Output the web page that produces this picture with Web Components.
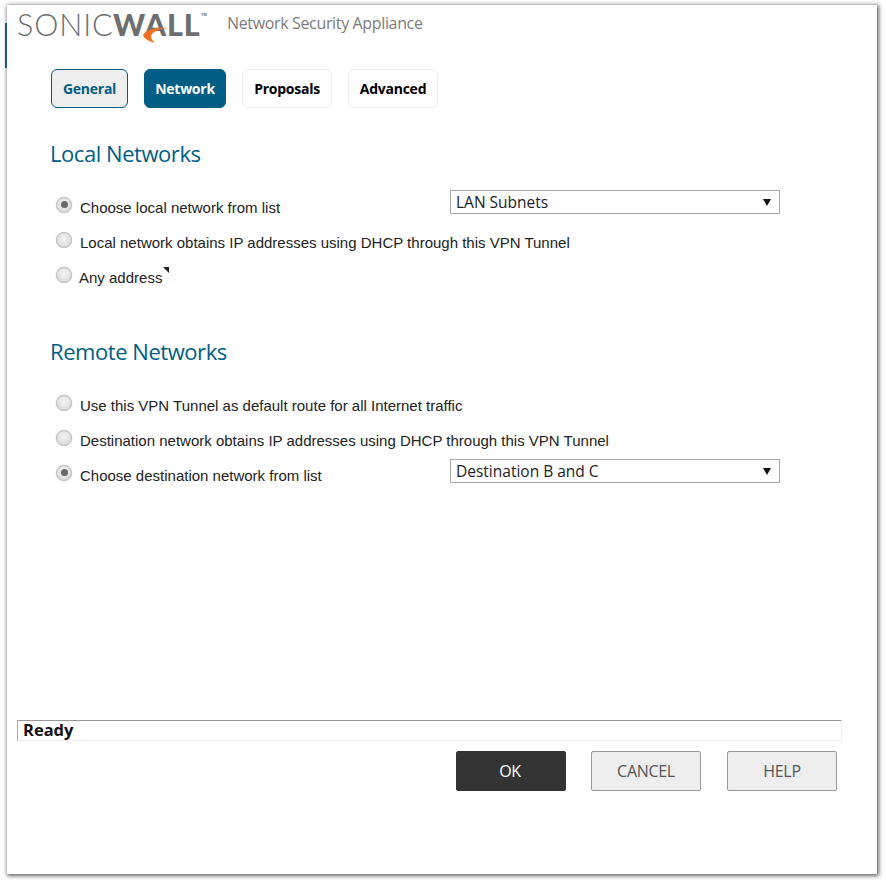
<!DOCTYPE html>
<html><head><meta charset="utf-8"><style>
html,body{margin:0;padding:0;background:#fff;overflow:hidden}
body{width:886px;height:883px}
</style></head><body>
<sw-dialog>
  <sw-header slot="header"></sw-header>
  <sw-tabs slot="tabs"></sw-tabs>
  <sw-section heading="Local Networks" style="--top:28px;--hgap:18px;--ry:-1px;--ty:2px">
    <sw-radio checked select="LAN Subnets">Choose local network from list</sw-radio>
    <sw-radio>Local network obtains IP addresses using DHCP through this VPN Tunnel</sw-radio>
    <sw-radio mark style="--gap:7px">Any address</sw-radio>
  </sw-section>
  <sw-section heading="Remote Networks" style="--top:41px;--hgap:19px;--ry:-2px;--ty:1px">
    <sw-radio>Use this VPN Tunnel as default route for all Internet traffic</sw-radio>
    <sw-radio>Destination network obtains IP addresses using DHCP through this VPN Tunnel</sw-radio>
    <sw-radio checked select="Destination B and C">Choose destination network from list</sw-radio>
  </sw-section>
  <sw-status slot="status">Ready</sw-status>
  <sw-actions slot="actions"></sw-actions>
</sw-dialog>
<script>
function def(name,html,init){
  customElements.define(name,class extends HTMLElement{
    constructor(){super();this.attachShadow({mode:'open'}).innerHTML=html;}
    connectedCallback(){if(init)init(this,this.shadowRoot);}
  });
}
def('sw-dialog',`<style>
:host{display:flex;flex-direction:column;box-sizing:border-box;width:870px;height:869px;margin:5px 0 0 7px;background:#fff;
box-shadow:1px 1px 4px 1px rgba(0,0,0,.6);position:relative}
.main{flex:1;display:flex;flex-direction:column;padding:0 0 0 43px}
.edge{position:absolute;left:-2px;top:18px;width:2px;height:45px;background:#1d5a70}
</style><div class="edge"></div>
<slot name="header"></slot><slot name="tabs"></slot>
<div class="main"><slot></slot></div>
<slot name="status"></slot><slot name="actions"></slot>`);

def('sw-header',`<style>
:host{display:flex;align-items:flex-start;height:64px;padding-left:10px;box-sizing:border-box}
.logo{position:relative;width:190px;height:42px;display:flex;align-items:baseline;padding-top:3px;box-sizing:border-box;
font:30.500px/32px "Lato","Open Sans",sans-serif;color:#6d6e70}
.s{font-weight:300;letter-spacing:.9px}
.w{font-weight:900;letter-spacing:.9px;margin-left:-.5px;font-size:30.500px}
.tm{position:absolute;left:184px;top:8px;font:bold 4px/4px "Liberation Sans",sans-serif;letter-spacing:0}
svg{position:absolute;left:126px;top:22px}
.t{margin-left:20px;padding-top:8px;font:16px/20px "Open Sans",sans-serif;color:#7b7b7b;letter-spacing:-.35px}
</style>
<div class="logo"><span class="s">SONIC</span><span class="w">WALL</span><span class="tm">TM</span>
<svg width="26" height="17" viewBox="0 0 26 17"><path d="M0 8C3 3 12 0 25 1C15 2 9 5 8 9C8 12 10 14 12 16C6 14 1 12 0 8Z" fill="#f0701f"/></svg></div>
<div class="t">Network Security Appliance</div>`);

def('sw-tabs',`<style>
:host{display:flex;gap:16px;padding-left:44px;height:39px}
</style>
<sw-tab variant="outline" style="--w:77px">General</sw-tab>
<sw-tab variant="active" style="--w:82px">Network</sw-tab>
<sw-tab style="--w:90px">Proposals</sw-tab>
<sw-tab style="--w:90px">Advanced</sw-tab>`);

def('sw-tab',`<style>
:host{display:flex;align-items:center;justify-content:center;box-sizing:border-box;width:var(--w);height:39px;border:1px solid #eee;border-radius:6px;
font:bold 14px/20px "Open Sans",sans-serif;color:#000;background:#fff;letter-spacing:-.25px}
:host([variant=outline]){background:#eee;border-color:#005e84;color:#005e84}
:host([variant=active]){background:#005e84;border-color:#005e84;color:#fff}
</style><slot></slot>`);

def('sw-section',`<style>
:host{display:block;padding-top:var(--top)}
h2{margin:0 0 var(--hgap);font:400 22px/34px "Open Sans",sans-serif;color:#005e84;letter-spacing:-.45px}
.rows{display:flex;flex-direction:column}
</style><h2></h2><div class="rows"><slot></slot></div>`,(el,sr)=>{sr.querySelector('h2').textContent=el.getAttribute('heading');});

def('sw-radio',`<style>
:host{display:flex;align-items:center;height:35px;margin-left:6px;position:relative;font:15px/18px "Liberation Sans",sans-serif;color:#222}
.r{flex:none;box-sizing:border-box;width:16px;height:16px;border-radius:50%;border:1px solid #bbb;background:radial-gradient(circle at 50% 40%,#f4f4f4,#d4d4d4);
display:flex;align-items:center;justify-content:center;margin-right:var(--gap,8px);transform:translateY(var(--ry));box-shadow:0 0 1px #aaa}
.d{width:7px;height:7px;border-radius:50%;background:#6a6a6a;display:none}
:host([checked]) .d{display:block}
.l{position:relative;top:var(--ty)}
.mk{display:none;width:0;height:0;border-top:6px solid #222;border-left:6px solid transparent;margin-left:1px;align-self:flex-start;margin-top:9px}
:host([mark]) .mk{display:block}
.sel{position:absolute;left:394px;top:2px;display:none}
:host([select]) .sel{display:flex}
</style><span class="r"><span class="d"></span></span><span class="l"><slot></slot></span><i class="mk"></i><sw-select class="sel"></sw-select>`,
(el,sr)=>{if(el.hasAttribute('select'))sr.querySelector('sw-select').textContent=el.getAttribute('select');});

def('sw-select',`<style>
:host{box-sizing:border-box;width:330px;height:24px;border:1px solid #aaa;background:#fff;display:flex;align-items:center;justify-content:space-between;
padding:0 8px 0 5px;font:15.500px/20px "Open Sans",sans-serif;color:#222}
svg{flex:none}
</style><slot></slot><svg width="8" height="8" viewBox="0 0 8 8"><path d="M0 1H8L4 8Z" fill="#111"/></svg>`);

def('sw-status',`<style>
:host{display:block;box-sizing:border-box;margin:0 35px 0 10px;height:21px;border-top:1px solid #999;border-left:1px solid #aaa;border-right:1px solid #eee;border-bottom:1px solid #eee;
padding-left:5px;font:bold 16.500px/17px "Open Sans",sans-serif;color:#111}
</style><slot></slot>`);

def('sw-actions',`<style>
:host{display:flex;justify-content:flex-end;gap:25px;padding:10px 40px 0 0;height:133px;box-sizing:border-box}
sw-btn:last-child{margin-left:1px}
</style><sw-btn primary>OK</sw-btn><sw-btn>CANCEL</sw-btn><sw-btn>HELP</sw-btn>`);

def('sw-btn',`<style>
:host{display:flex;align-items:center;justify-content:center;box-sizing:border-box;width:110px;height:40px;border:1px solid #999;border-radius:2px;background:#eee;
font:16px/20px "Open Sans",sans-serif;color:#555;letter-spacing:-.3px}
:host([primary]){background:#333;border-color:#333;color:#fff;padding-right:2px}
</style><slot></slot>`);
</script>
</body></html>
